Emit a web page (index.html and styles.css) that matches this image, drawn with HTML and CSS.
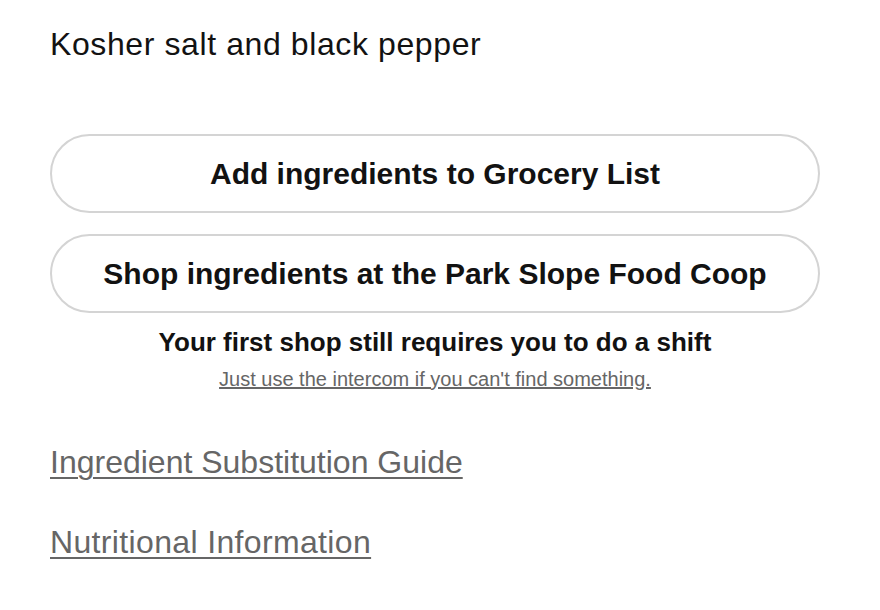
FILE: index.html
```html
<!DOCTYPE html>
<html>
<head>
<meta charset="utf-8">
<link rel="stylesheet" href="styles.css">
</head>
<body>
<main class="wrap">
  <p class="ingredient">Kosher salt and black pepper</p>
  <div class="actions">
    <button class="pill">Add ingredients to Grocery List</button>
    <button class="pill">Shop ingredients at the Park Slope Food Coop</button>
  </div>
  <div class="note">
    <p class="note-title">Your first shop still requires you to do a shift</p>
    <a class="note-link" href="#">Just use the intercom if you can't find something.</a>
  </div>
  <nav class="links">
    <a class="big-link" href="#">Ingredient Substitution Guide</a>
    <a class="big-link wide" href="#">Nutritional Information</a>
  </nav>
</main>
</body>
</html>
```
FILE: styles.css
```css
html, body { margin: 0; padding: 0; background: #fff; }
body { font-family: "Liberation Sans", Arial, sans-serif; color: #121212; }
.wrap { padding: 26px 60px 0 50px; width: 770px; }
.ingredient { margin: 0; font-size: 32px; line-height: 36px; letter-spacing: 0.6px; color: #121212; }
.actions { margin-top: 72px; display: flex; flex-direction: column; gap: 21px; }
.pill {
  box-sizing: border-box; height: 79px; width: 100%; padding: 0;
  border: 2px solid #d4d4d4; border-radius: 40px; background: #fff;
  font-family: "Liberation Sans", Arial, sans-serif; font-weight: 700; font-size: 30px; color: #121212;
}
.note { display: flex; flex-direction: column; align-items: center; margin-top: 14px; }
.note-title { margin: 0; font-weight: 700; font-size: 26px; line-height: 30px; color: #121212; }
.note-link { margin-top: 10px; font-size: 20px; line-height: 24px; color: #666; }
.links { display: flex; flex-direction: column; align-items: flex-start; margin-top: 52px; gap: 42px; }
.big-link { font-size: 32px; line-height: 38px; color: #666; text-underline-offset: 4px; text-decoration-thickness: 1.5px; }
.wide { letter-spacing: 0.35px; }
```
